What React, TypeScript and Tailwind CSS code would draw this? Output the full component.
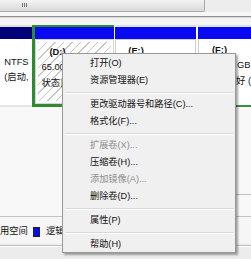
const items: { label: string; disabled?: boolean; sep?: boolean }[] = [
  { label: "打开(O)" },
  { label: "资源管理器(E)" },
  { label: "", sep: true },
  { label: "更改驱动器号和路径(C)..." },
  { label: "格式化(F)..." },
  { label: "", sep: true },
  { label: "扩展卷(X)...", disabled: true },
  { label: "压缩卷(H)..." },
  { label: "添加镜像(A)...", disabled: true },
  { label: "删除卷(D)..." },
  { label: "", sep: true },
  { label: "属性(P)" },
  { label: "", sep: true },
  { label: "帮助(H)" },
];

const ContextMenu = () => (
  <div className="absolute left-[62px] top-[53px] w-[174px] h-[200px] bg-[#f0f0f0] border border-[#979797] shadow-[2px_2px_2px_rgba(0,0,0,0.35)] pt-[1px]">
    {items.map((it, i) =>
      it.sep ? (
        <div key={i} className="h-[7px] flex flex-col justify-center px-[2px]">
          <div className="h-px bg-[#d9d9d9]" />
          <div className="h-px bg-white" />
        </div>
      ) : (
        <div
          key={i}
          className={`h-[17px] flex items-center pl-[27px] text-[9.2px] ${it.disabled ? "text-[#8e8e8e]" : "text-[#111]"}`}
        >
          {it.label}
        </div>
      )
    )}
  </div>
);

export default function App() {
  return (
    <div
      className="relative w-[251px] h-[259px] overflow-hidden bg-[#f2f2f2] text-[9.3px] leading-none text-[#111]"
      style={{ fontFamily: '"Liberation Sans", "Noto Sans CJK SC", sans-serif' }}
    >
      {/* horizontal scrollbar */}
      <div className="flex h-[12px]">
        <div className="w-[205px] bg-gradient-to-b from-[#f4f4f4] to-[#d9d9d9] border-b border-r border-[#a8a8a8] rounded-br-[2px] pl-[22px] pt-[3px]">
          <div className="flex gap-[1px]">
            <div className="w-px h-[4px] bg-[#777]" />
            <div className="w-px h-[4px] bg-[#777]" />
            <div className="w-px h-[4px] bg-[#777]" />
          </div>
        </div>
        <div className="flex-1 bg-[#ededed]" />
      </div>
      <div className="h-[4px] bg-[#f7f7f7]" />
      <div className="h-px bg-[#8f8f8f]" />
      <div className="h-px bg-[#d8d8d8]" />
      <div className="h-[7px] bg-[#f3f3f3]" />

      {/* disk row */}
      <div className="flex h-[82px]">
        <div className="w-[32px] flex flex-col border-t-2 border-[#d9e3d9]">
          <div className="h-[12px] bg-[#00007a]" />
          <div className="flex-1 bg-white flex flex-col items-end pt-[19px] gap-[6px] pr-[3px] border-b-2 border-[#e6e6e6]">
            <span>NTFS</span>
            <span className="whitespace-nowrap">(启动,</span>
          </div>
        </div>
        <div className="w-[84px] flex flex-col border-l-[3px] border-t-2 border-b-[3px] border-[#2e8b2e]">
          <div className="h-[12px] bg-[#0a0af2]" />
          <div className="flex-1 border border-[#d4d4d4] p-[2px] bg-white">
            <div className="h-full bg-[repeating-linear-gradient(135deg,#c8c8c8_0,#c8c8c8_1px,#fff_1px,#fff_6px)] flex flex-col pl-[4px] pt-[6px] gap-[6px]">
              <span className="font-bold pl-[8px]">(D:)</span>
              <span>65.00</span>
              <span>状态良好</span>
            </div>
          </div>
        </div>
        <div className="w-px bg-white" />
        <div className="w-[82px] flex flex-col border-t-2 border-[#d9e3d9]">
          <div className="h-[12px] bg-[#0a0af2]" />
          <div className="flex-1 bg-white border border-[#cfcfcf] pl-[12px] pt-[7px] border-b-2">
            <span className="font-bold">(E:)</span>
          </div>
        </div>
        <div className="w-[2px] bg-white" />
        <div className="flex-1 flex flex-col border-t-2 border-[#d9e3d9]">
          <div className="h-[12px] bg-[#0a0af2]" />
          <div className="flex-1 bg-white border-l border-[#cfcfcf] border-b-2 border-b-[#3b8f3b] flex flex-col pt-[7px] gap-[6px]">
            <span className="font-bold pl-[13px]">(F:)</span>
            <span className="pl-[38px] whitespace-nowrap">GB</span>
            <span className="pl-[37px] whitespace-nowrap">好 (</span>
          </div>
        </div>
      </div>

      {/* empty area */}
      <div className="flex h-[110px] bg-[#f8f8f8] border-b border-[#c4c4c4]">
        <div className="flex-1" />
        <div className="w-[15px] h-[88px] border-b border-[#bdbdbd]" />
      </div>

      {/* legend */}
      <div className="flex items-center h-[26px] pt-[3px] bg-[#f6f6f6] gap-[4px] whitespace-nowrap">
        <span>用空间</span>
        <div className="w-[7px] h-[10px] bg-[#0a0af2] border border-[#222] ml-[1px]" />
        <span className="ml-[2px]">逻辑驱动器</span>
      </div>
      <div className="h-[2px] bg-[#efefef]" />
      <div className="h-px bg-[#bcbcbc]" />
      <div className="h-px bg-white" />
      <div className="h-[20px] bg-[#ececec]" />

      <ContextMenu />
    </div>
  );
}
